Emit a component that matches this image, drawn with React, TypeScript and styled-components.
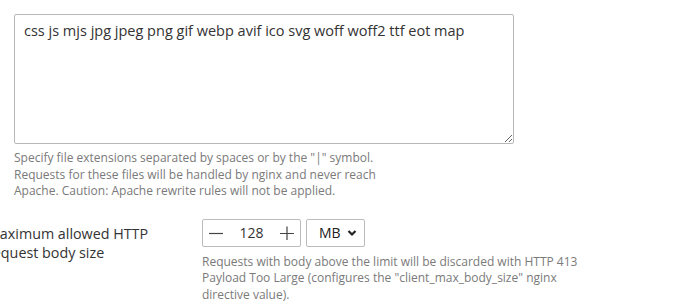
import React from "react";
import styled, { createGlobalStyle } from "styled-components";

const Global = createGlobalStyle`
  html, body { margin: 0; padding: 0; background: #fff; overflow: hidden; }
  body { font-family: "Open Sans", sans-serif; color: #333; }
`;

const Page = styled.div`
  width: 700px;
  height: 306px;
  overflow: hidden;
  padding: 14px 0 0 14px;
  box-sizing: border-box;
`;

const Area = styled.textarea`
  display: block;
  width: 500px;
  height: 130px;
  box-sizing: border-box;
  border: 1px solid #b8b8b8;
  border-radius: 2px;
  padding: 6px 9px;
  font-family: "Open Sans", sans-serif;
  font-size: 14.5px;
  line-height: 20px;
  color: #333;
  resize: both;
  outline: none;
`;

const Hint = styled.div<{ $w: number; $mt?: number }>`
  font-size: 12px;
  line-height: 16.5px;
  color: #7a7a7a;
  width: ${(p) => p.$w}px;
  margin-top: ${(p) => p.$mt ?? 0}px;
`;

const Row = styled.div`
  display: grid;
  grid-template-columns: 215px 1fr;
  margin-left: -27px;
  margin-top: 19px;
`;

const Label = styled.div`
  font-size: 14.3px;
  line-height: 19px;
  color: #333;
  padding-top: 5px;
  width: 175px;
`;

const Controls = styled.div`
  display: flex;
  gap: 5px;
  align-items: center;
`;

const Spinner = styled.div`
  display: flex;
  align-items: center;
  width: 99px;
  height: 28px;
  box-sizing: border-box;
  border: 1px solid #bbb;
  border-radius: 2px;
`;

const SpinBtn = styled.span`
  width: 26px;
  display: flex;
  justify-content: center;
  align-items: center;
  color: #444;
`;

const Value = styled.span`
  flex: 1;
  text-align: center;
  font-size: 14px;
  color: #333;
`;

const Select = styled.div`
  display: flex;
  align-items: center;
  width: 59px;
  height: 28px;
  box-sizing: border-box;
  border: 1px solid #bbb;
  border-radius: 2px;
  padding-left: 12px;
  gap: 6px;
  font-size: 14px;
  color: #222;
`;

export default function App() {
  return (
    <Page>
      <Global />
      <Area defaultValue="css js mjs jpg jpeg png gif webp avif ico svg woff woff2 ttf eot map" />
      <Hint $w={380} $mt={6}>
        Specify file extensions separated by spaces or by the "|" symbol.
        Requests for these files will be handled by nginx and never reach
        Apache. Caution: Apache rewrite rules will not be applied.
      </Hint>
      <Row>
        <Label>Maximum allowed HTTP request body size</Label>
        <div>
          <Controls>
            <Spinner>
              <SpinBtn>
                <svg width="14" height="14" viewBox="0 0 14 14">
                  <path d="M0 7.5h14" stroke="#444" strokeWidth="1.2" />
                </svg>
              </SpinBtn>
              <Value>128</Value>
              <SpinBtn>
                <svg width="14" height="14" viewBox="0 0 14 14">
                  <path d="M0 7.5h14M7 0.5v14" stroke="#444" strokeWidth="1.2" />
                </svg>
              </SpinBtn>
            </Spinner>
            <Select>
              MB
              <svg width="10" height="8" viewBox="0 0 10 8">
                <path d="M1.5 2l3.5 3.5 3.5-3.5" fill="none" stroke="#222" strokeWidth="2.2" />
              </svg>
            </Select>
          </Controls>
          <Hint $w={380} $mt={7}>
            Requests with body above the limit will be discarded with HTTP 413
            Payload Too Large (configures the "client_max_body_size" nginx
            directive value).
          </Hint>
        </div>
      </Row>
    </Page>
  );
}
